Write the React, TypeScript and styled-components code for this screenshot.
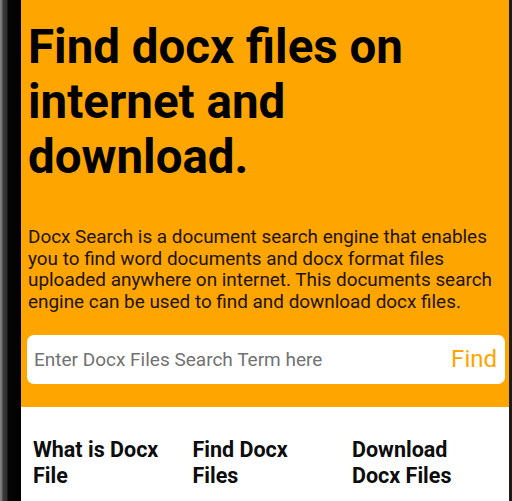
import { useState } from "react";
import styled, { createGlobalStyle } from "styled-components";

const GlobalStyle = createGlobalStyle`
  html, body {
    margin: 0;
    padding: 0;
    background: #ffffff;
    font-family: Roboto, "Liberation Sans", Arial, sans-serif;
  }
  * {
    box-sizing: border-box;
  }
`;

const Device = styled.div`
  display: flex;
  width: 512px;
  height: 501px;
  overflow: hidden;
`;

const Bezel = styled.div`
  flex: 0 0 21px;
  background: linear-gradient(
    to right,
    #8a8a8a 0px,
    #6a6a6a 2px,
    #3c3c3c 3px,
    #2e2e2e 7px,
    #050505 8px,
    #000000 21px
  );
`;

const EdgeLine = styled.div`
  flex: 0 0 3px;
  background: #1e1a14;
`;

const Screen = styled.main`
  flex: 1;
  display: flex;
  flex-direction: column;
  min-width: 0;
`;

const Hero = styled.section`
  background: #ffa500;
  padding: 20px 4px 23px 6px;
`;

const Title = styled.h1`
  margin: 0 0 41px 1px;
  font-size: 47.5px;
  line-height: 55px;
  font-weight: 700;
  color: #000000;
`;

const Intro = styled.p`
  margin: 0 0 22px 1px;
  font-size: 18.9px;
  line-height: 21.7px;
  color: #1c1408;
`;

const SearchBar = styled.form`
  display: flex;
  align-items: center;
  height: 49px;
  background: #ffffff;
  border-radius: 7px;
  padding: 0 8px 0 7px;
`;

const SearchInput = styled.input`
  flex: 1;
  min-width: 0;
  border: none;
  outline: none;
  background: transparent;
  font-family: inherit;
  font-size: 19px;
  color: #333333;
  padding: 0;

  &::placeholder {
    color: #727272;
  }
`;

const FindButton = styled.button`
  border: none;
  background: transparent;
  padding: 0;
  font-family: inherit;
  font-size: 24px;
  color: #ffa500;
  cursor: pointer;
`;

const Features = styled.section`
  flex: 1;
  background: #ffffff;
  padding: 30px 0 0 12px;
  display: grid;
  grid-template-columns: repeat(3, 159.5px);
  align-content: start;
`;

const FeatureTitle = styled.h2`
  margin: 0;
  padding-right: 24px;
  font-size: 21.5px;
  line-height: 26px;
  font-weight: 700;
  color: #0d0d0d;
`;

const features = ["What is Docx File", "Find Docx Files", "Download Docx Files"];

export default function App() {
  const [term, setTerm] = useState("");

  return (
    <>
      <GlobalStyle />
      <Device>
        <Bezel />
        <Screen>
          <Hero>
            <Title>Find docx files on internet and download.</Title>
            <Intro>
              Docx Search is a document search engine that enables you to find
              word documents and docx format files uploaded anywhere on
              internet. This documents search engine can be used to find and
              download docx files.
            </Intro>
            <SearchBar onSubmit={(e) => e.preventDefault()}>
              <SearchInput
                value={term}
                onChange={(e) => setTerm(e.target.value)}
                placeholder="Enter Docx Files Search Term here"
              />
              <FindButton type="submit">Find</FindButton>
            </SearchBar>
          </Hero>
          <Features>
            {features.map((title) => (
              <FeatureTitle key={title}>{title}</FeatureTitle>
            ))}
          </Features>
        </Screen>
        <EdgeLine />
      </Device>
    </>
  );
}
